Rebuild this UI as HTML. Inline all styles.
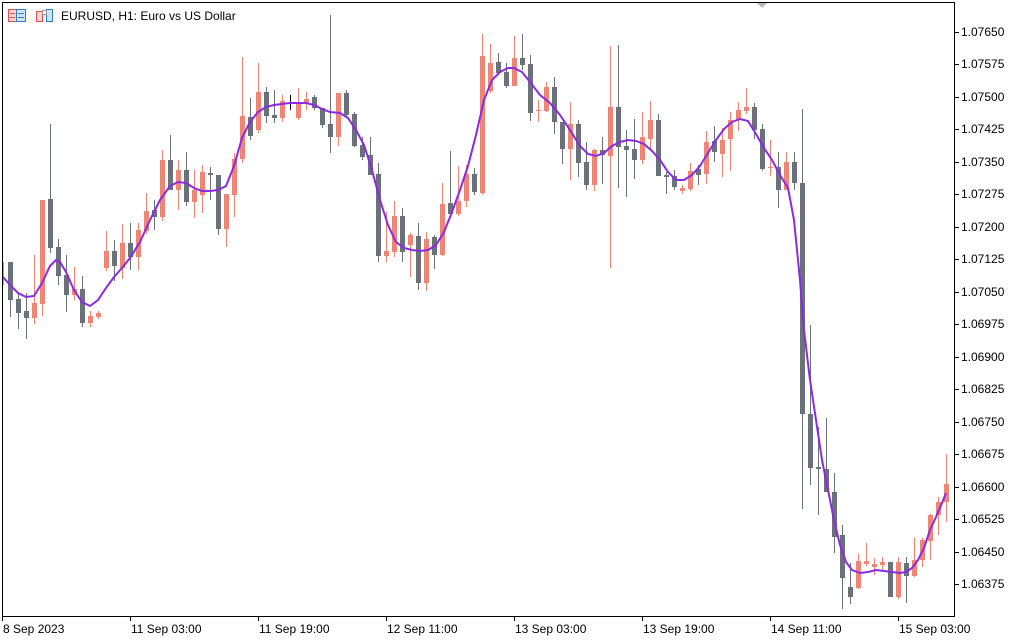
<!DOCTYPE html>
<html><head><meta charset="utf-8"><style>
html,body{margin:0;padding:0;background:#fff;width:1024px;height:640px;overflow:hidden}
svg{display:block}
text{font-family:"Liberation Sans","DejaVu Sans",sans-serif;font-size:12px;fill:#000}
</style></head><body>
<svg id="c" width="1024" height="640" xmlns="http://www.w3.org/2000/svg"></svg>
<script>
var D=[
[262,300,262,317,0],[299,313,293,329,0],[311,318,293,339,0],[303,318,255,324,1],[200,304,200,316,1],
[199,248,124,253,0],[247,276,239,285,0],[275,295,255,312,0],[289,295,267,300,1],[289,323,276,327,0],
[316,323,311,327,1],[313,317,311,319,1],[251,268,231,271,1],[251,266,240,281,0],[243,268,224,279,1],
[243,257,223,270,0],[230,257,223,270,1],[211,231,193,234,1],[210,217,200,230,0],[160,217,150,221,1],
[160,190,135,190,0],[170,190,160,210,1],[170,202,152,206,0],[190,202,170,218,1],[172,195,165,213,1],
[173,175,167,200,0],[175,229,175,235,0],[194,229,194,247,1],[159,195,153,217,1],[116,159,57,163,1],
[117,136,98,140,0],[92,130,63,133,1],[92,116,87,123,0],[115,118,90,123,0],[101,118,95,122,1],
[103,104,95,110,2],[104,118,88,120,1],[99,104,92,110,1],[97,108,95,110,0],[108,125,108,128,0],
[124,137,15,153,0],[93,137,93,146,1],[93,115,90,118,0],[114,146,112,147,0],[145,157,137,160,0],
[155,175,137,175,0],[174,256,163,262,0],[251,256,212,262,1],[216,252,201,257,1],[216,252,208,262,0],
[235,245,233,277,1],[236,283,223,290,0],[239,283,232,291,1],[237,255,235,269,0],[204,255,183,256,1],
[203,214,151,214,0],[201,214,166,216,1],[174,201,165,207,1],[174,192,168,195,0],[56,193,34,195,1],
[63,91,44,93,1],[62,73,53,75,0],[72,86,63,88,0],[58,86,36,86,1],[58,65,34,70,0],
[64,113,55,121,0],[110,111,100,122,1],[87,111,82,112,1],[87,122,77,134,0],[122,149,122,164,0],
[124,149,102,180,1],[124,163,120,177,0],[162,185,142,190,0],[150,185,149,191,1],[150,155,137,184,0],
[107,156,46,268,1],[107,147,45,188,0],[146,150,130,197,0],[149,160,119,179,0],[137,160,112,164,1],
[120,139,101,150,1],[120,176,114,176,0],[175,177,172,194,0],[176,187,170,190,0],[188,191,185,194,1],
[171,189,163,191,1],[169,175,165,185,0],[142,174,131,184,1],[141,152,126,162,0],[140,154,128,177,1],
[120,139,112,171,1],[110,120,102,131,1],[107,111,88,114,1],[107,130,103,139,0],[129,169,124,171,0],
[167,168,140,176,1],[167,190,152,208,0],[162,190,152,190,1],[162,183,152,190,0],[183,414,109,509,0],
[414,468,325,485,0],[467,469,427,515,0],[469,492,418,492,0],[492,537,473,553,0],[535,578,525,609,0],
[587,597,563,604,0],[561,588,554,589,1],[561,564,543,566,1],[564,567,558,575,1],[562,565,557,571,1],
[562,597,562,597,0],[562,597,557,599,1],[563,576,557,603,0],[560,576,538,577,1],[540,560,538,567,1],
[515,541,514,560,1],[502,515,497,535,1],[484,502,454,522,1]];
var s='';
s+='<rect x="2" y="262" width="2" height="23" fill="#ef8575"/>';
var cols=['#6b7179','#ef8575','#000'];
for(var k=0;k<D.length;k++){var d=D[k],x=10+8*k,c=cols[d[4]];
 if(d[4]==2){s+='<line x1="'+(x+0.5)+'" y1="'+d[2]+'" x2="'+(x+0.5)+'" y2="'+d[3]+'" stroke="#000"/><line x1="'+(x-2)+'" y1="'+d[0]+'.5" x2="'+(x+3)+'" y2="'+d[0]+'.5" stroke="#000"/>';continue;}
 s+='<line x1="'+(x+0.5)+'" y1="'+d[2]+'" x2="'+(x+0.5)+'" y2="'+d[3]+'" stroke="'+c+'"/>';
 var h=Math.max(1,d[1]-d[0]);
 s+='<rect x="'+(x-2)+'" y="'+d[0]+'" width="5" height="'+h+'" fill="'+c+'"/>';}
var M=[3,277,10,285,18,293,26,297,34,296,42,283,50,266,56,260,60,262,66,272,74,290,82,302,90,306,98,300,106,288,114,277,122,268,130,258,140,242,150,220,160,200,170,186,178,182,186,183,194,188,202,191,210,191,218,190,226,186,234,166,242,138,250,122,258,112,266,107,274,105,282,104,290,103,298,103,306,103,314,105,322,109,330,112,340,113,348,118,356,130,364,145,372,170,380,200,388,225,396,242,404,248,412,250,420,251,428,250,436,245,444,232,452,212,460,190,468,166,476,135,484,100,492,80,500,72,508,68,514,68,522,72,530,82,540,95,550,103,560,115,570,130,580,146,588,154,596,156,604,153,612,146,620,142,628,140,636,141,644,144,652,151,660,160,668,172,676,180,684,180,692,175,700,166,708,153,716,140,724,129,732,122,740,119,748,121,756,134,764,148,772,160,780,175,788,188,794,220,800,280,804,330,810,380,816,420,822,460,828,490,834,520,840,545,846,562,852,570,860,573,868,572,876,570,884,571,892,572,900,573,906,572,912,568,918,560,924,548,930,530,936,517,942,503,946,493];
s+='<polyline fill="none" stroke="#8a2be2" stroke-width="2" points="'+M.join(' ')+'"/>';
s+='<rect x="2.5" y="2.5" width="952" height="614" fill="none" stroke="#000"/>';
s+='<polygon points="757,3 767,3 762,8" fill="#b8b8b8"/>';
var P=['1.07650','1.07575','1.07500','1.07425','1.07350','1.07275','1.07200','1.07125','1.07050','1.06975','1.06900','1.06825','1.06750','1.06675','1.06600','1.06525','1.06450','1.06375'];
for(var i=0;i<P.length;i++){var y=Math.round(32+i*32.47);
 s+='<line x1="955" y1="'+(y+0.5)+'" x2="959" y2="'+(y+0.5)+'" stroke="#000"/>';
 s+='<text x="961" y="'+(y+4)+'">'+P[i]+'</text>';}
var T=[[2,'8 Sep 2023'],[130,'11 Sep 03:00'],[258,'11 Sep 19:00'],[386,'12 Sep 11:00'],[514,'13 Sep 03:00'],[642,'13 Sep 19:00'],[770,'14 Sep 11:00'],[898,'15 Sep 03:00']];
for(var i=0;i<T.length;i++){s+='<line x1="'+(T[i][0]+0.5)+'" y1="617" x2="'+(T[i][0]+0.5)+'" y2="621" stroke="#000"/>';
 s+='<text x="'+(T[i][0]+1)+'" y="633">'+T[i][1]+'</text>';}
s+='<rect x="8.5" y="9.5" width="8" height="12" fill="#fbd3cf" stroke="#e05050"/><rect x="16.5" y="9.5" width="9" height="12" fill="#cfe4f7" stroke="#2c7cc8"/>';
s+='<line x1="10" y1="13.5" x2="15" y2="13.5" stroke="#e05050"/><line x1="10" y1="17.5" x2="15" y2="17.5" stroke="#e05050"/><line x1="18" y1="13.5" x2="24" y2="13.5" stroke="#2c7cc8"/><line x1="18" y1="17.5" x2="24" y2="17.5" stroke="#2c7cc8"/>';
s+='<rect x="36.5" y="11.5" width="6" height="10" fill="#fbd3cf" stroke="#e05050"/><rect x="46.5" y="9.5" width="6" height="12" fill="#cfe4f7" stroke="#2c7cc8"/><rect x="42.5" y="10.5" width="4" height="4" fill="#fff" stroke="#999"/>';
s+='<text x="61" y="20">EURUSD, H1:  Euro vs US Dollar</text>';
document.getElementById('c').innerHTML=s;
</script>
</body></html>
